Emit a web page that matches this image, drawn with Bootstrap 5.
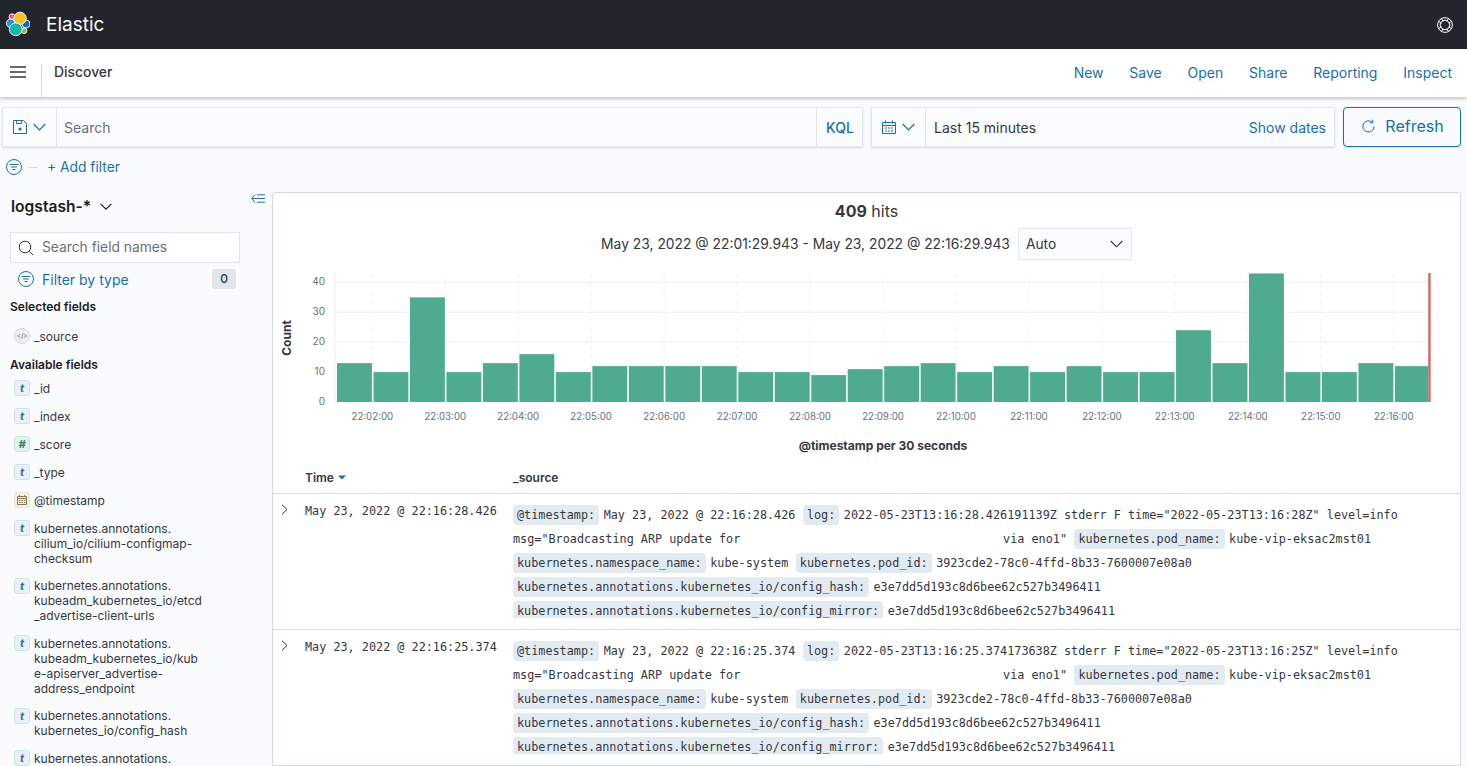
<!DOCTYPE html>
<html lang="en">
<head>
<meta charset="utf-8">
<title>Discover - Elastic</title>
<link href="https://cdn.jsdelivr.net/npm/bootstrap@5.3.0/dist/css/bootstrap.min.css" rel="stylesheet">
<style>
html,body{height:766px;overflow:hidden}
body{background:#fafbfd;font-family:Inter,"Liberation Sans",sans-serif;color:#343741;font-size:14px}
a{text-decoration:none}
.topbar{height:49px;background:#22252b;color:#fff}
.brand-txt{font-size:19px;font-weight:400;margin-left:16px;line-height:49px}
.help{margin-right:14px}
.subbar{height:48px;background:#fff;box-shadow:0 2px 3px rgba(60,70,90,.28);position:relative;z-index:2;padding-bottom:2px}
.burger{width:41px;padding-left:10px}
.subbar-sep{width:1px;height:32px;background:#d3dae6;align-self:flex-end;margin-bottom:-2px}
.crumb{margin:1px 0 0 12px;font-weight:500;color:#343741;font-size:13.9px}
.act-link{color:#1a6fa9;font-size:14px;margin-left:25.8px}
.act-wrap{padding-right:15px}
.qrow{padding:10px 6px 0 2px;gap:8px}
.qbox{height:40px;background:#fbfcfd;border:1px solid #e3e7ef;box-shadow:0 1px 2px rgba(60,70,90,.18)}
.qsearch{width:861px}
.qdate{width:464px}
.qpre{width:54px;border-right:1px solid #e3e7ef;height:100%;gap:6px;padding-left:10px}
.qtext{color:#69707d;font-size:14px;padding-left:7px}
.qval{color:#343741;font-size:14px;padding-left:8px}
.kql{width:46px;border-left:1px solid #e3e7ef;height:100%;color:#1a6fa9;font-size:14px;font-weight:500;padding-left:1px}
.sdates{color:#1a6fa9;font-size:14px;padding-right:8px}
.refresh{width:118px;height:40px;border:1px solid #1a6fa9;border-radius:4px;background:#f8fafd;color:#1a6fa9;font-size:16px;gap:10px;box-shadow:0 1px 2px rgba(60,70,90,.15);padding:0 0 2px 2px}
.frow{height:24px;margin-top:8px;padding-left:6px}
.fdash{width:10px;height:1px;background:#d3dae6;margin:0 9px 0 6px}
.fadd{color:#1a6fa9;font-size:13.8px}
.mainrow{margin-top:13px}
.sidecol{width:272px;flex:none;height:574px;overflow:hidden}
.pat-row{height:29px;padding:0 7px 0 11px}
.pat{font-size:15.6px;font-weight:600;color:#1a1c21;margin-right:9px}
.collapse-ic{margin-left:auto}
.fsearch{width:230px;height:31px;margin:11px 0 0 10px;background:#fff;border:1px solid #dfe4ec;color:#69707d;gap:8px;padding-left:7px;font-size:13.8px}
.ftype{width:226px;height:22px;margin:5px 0 0 10px;padding-left:8px;gap:8px;color:#1a6fa9;font-size:14px}
.zero{margin-left:auto;width:24px;height:20px;background:#e0e5ee;border-radius:3px;color:#343741;font-size:12px;font-weight:500}
.fhead{font-size:12px;font-weight:600;line-height:18px;color:#1a1c21;padding-left:10px}
.fhead-a{margin-top:8px}
.fhead-b{margin-top:6px}
.fitem{padding:6px 0 6px 14px;font-size:12px;line-height:15px;color:#343741;gap:4px}
.fitem-sel{margin-top:6px}
.ftxt{padding-top:.5px}
.ftic{width:16px;height:16px;flex:none;border-radius:3px;font-size:11px;line-height:14px;text-align:center;font-weight:700;font-style:italic;border:1px solid}
.ftic-t{background:#e8f1f8;border-color:#cfe0ee;color:#3a6a96}
.ftic-n{background:#e3f4ee;border-color:#c4e6da;color:#2d7a62}
.ftic-s{background:#eee;border-color:#d5d7da;color:#69707d;border-radius:50%;font-size:7px;font-style:normal;font-weight:400;letter-spacing:-.3px}
.ftic-d{background:#f5efe4;border-color:#ebe2d1;display:flex;align-items:center;justify-content:center}
.maincard{width:1189px;flex:none;background:#fff;border:1px solid #d3dae6;border-radius:3px 3px 0 0;height:580px;overflow:hidden}
.hits{text-align:center;font-size:16px;line-height:20px;margin-top:8px;color:#343741}
.hits b{font-weight:700}
.range{height:32px;margin-top:7px;gap:8px;font-size:13.85px;color:#343741}
.autosel{width:114px;height:32px;border:1px solid #e3e7ef;background:#fbfcfd;padding:0 8px 0 7px;font-size:13.8px}
.chart{display:block;margin-top:4px}
.chart text{font-family:Inter,"Liberation Sans",sans-serif}
.thead-row{height:32px;border-bottom:1px solid #d3dae6;font-size:12px;font-weight:600;color:#343741}
.col-caret{width:32px;flex:none}
.col-time{width:208px;flex:none}
.doc-row{height:136px;border-bottom:1px solid #d3dae6;padding-top:9px;font-family:"DejaVu Sans Mono","Liberation Mono",monospace;font-size:11.8px;color:#343741}
.doc-time{line-height:16px}
.caret-ic{margin:1px 0 0 8px;display:block}
.doc-src{height:115px;overflow:hidden;flex:1;min-width:0}
.src-line{line-height:24px;height:24px;white-space:pre;display:flex;align-items:center}
.key{background:#e2ebf2;border-radius:4px;padding:0 4px;height:20px;line-height:20px;margin-right:4.5px}
.val{margin-right:7.5px}
</style>
</head>
<body>
<div class="topbar d-flex align-items-center justify-content-between">
  <div class="d-flex align-items-center">
    <svg width="30" height="37" viewBox="0 6 30 37" aria-hidden="true">
      <g stroke="#fff" stroke-width=".9">
        <circle cx="12" cy="16.7" r="2.9" fill="#ef4f95"/>
        <circle cx="10.7" cy="23.3" r="4.3" fill="#2f8fd8"/>
        <circle cx="26" cy="24" r="4" fill="#0a6cc0"/>
        <circle cx="20" cy="18.3" r="6.2" fill="#fbbf24"/>
        <circle cx="24" cy="30.7" r="2.9" fill="#8cbf3f"/>
        <circle cx="15.7" cy="29.3" r="6.4" fill="#14b8a6"/>
      </g>
    </svg>
    <span class="brand-txt">Elastic</span>
  </div>
  <svg class="help" width="16" height="16" viewBox="0 0 16 16" fill="none" stroke="#fff" stroke-width="1" aria-hidden="true">
    <circle cx="8" cy="8" r="7.4"/><circle cx="8" cy="8" r="4.8"/>
    <path d="M1.6 4.6l3 1.6M4.6 1.6l1.6 3M11.4 1.6l-1.6 3M14.4 4.6l-3 1.6M1.6 11.4l3-1.6M4.6 14.4l1.6-3M11.4 14.4l-1.6-3M14.4 11.4l-3-1.6"/>
  </svg>
</div>

<div class="subbar d-flex align-items-center">
  <div class="burger d-flex align-items-center">
    <svg width="16" height="12" viewBox="0 0 16 12" aria-hidden="true"><path d="M0 1h16M0 6h16M0 11h16" stroke="#343741" stroke-width="1.4"/></svg>
  </div>
  <div class="subbar-sep"></div>
  <span class="crumb">Discover</span>
  <div class="act-wrap ms-auto d-flex">
    <a class="act-link" href="#">New</a>
    <a class="act-link" href="#">Save</a>
    <a class="act-link" href="#">Open</a>
    <a class="act-link" href="#">Share</a>
    <a class="act-link" href="#">Reporting</a>
    <a class="act-link" href="#">Inspect</a>
  </div>
</div>

<div class="qrow d-flex">
  <div class="qbox qsearch d-flex align-items-center">
    <div class="qpre d-flex align-items-center">
      <svg width="14" height="14" viewBox="0 0 14 14" fill="none" stroke="#1a6fa9" aria-hidden="true"><path d="M.5.5h10l3 3v10H.5zM3.5.5v3h5v-3"/><circle cx="7" cy="9" r="1.5" fill="#1a6fa9" stroke="none"/></svg>
      <svg width="13" height="8" viewBox="0 0 13 8" fill="none" stroke="#1a6fa9" stroke-width="1.2" aria-hidden="true"><path d="M.7 1l5.8 5.8L12.3 1"/></svg>
    </div>
    <span class="qtext flex-grow-1">Search</span>
    <div class="kql d-flex align-items-center justify-content-center">KQL</div>
  </div>
  <div class="qbox qdate d-flex align-items-center">
    <div class="qpre d-flex align-items-center">
      <svg width="14" height="14" viewBox="0 0 14 14" fill="none" stroke="#1a6fa9" aria-hidden="true"><path d="M.5 2.5h13v11H.5zM.5 5.5h13M3.5.5v3M10.5.5v3"/><path d="M3 8h2M6 8h2M9 8h2M3 11h2M6 11h2M9 11h2"/></svg>
      <svg width="13" height="8" viewBox="0 0 13 8" fill="none" stroke="#1a6fa9" stroke-width="1.2" aria-hidden="true"><path d="M.7 1l5.8 5.8L12.3 1"/></svg>
    </div>
    <span class="qval flex-grow-1">Last 15 minutes</span>
    <span class="sdates">Show dates</span>
  </div>
  <div class="refresh d-flex align-items-center justify-content-center">
    <svg width="13" height="14" viewBox="0 0 13 14" fill="none" stroke="#1a6fa9" stroke-width="1" aria-hidden="true"><path d="M10.6 3.6A5.6 5.6 0 1 0 12.1 7.5"/><path d="M10.8 .8v3h-3"/></svg>
    <span>Refresh</span>
  </div>
</div>

<div class="frow d-flex align-items-center">
  <svg width="16" height="16" viewBox="0 0 16 16" fill="none" stroke="#1a6fa9" aria-hidden="true"><circle cx="8" cy="8" r="7.5"/><path d="M3.5 5.5h9M5 8h6M6.5 10.5h3"/></svg>
  <span class="fdash"></span>
  <a class="fadd" href="#">+ Add filter</a>
</div>

<div class="mainrow d-flex">
  <aside class="sidecol">
    <div class="pat-row d-flex align-items-center">
      <span class="pat">logstash-*</span>
      <svg width="12" height="7" viewBox="0 0 12 7" fill="none" stroke="#1a1c21" stroke-width="1.1" aria-hidden="true"><path d="M.6.8L6 6.2 11.4.8"/></svg>
      <svg class="collapse-ic mb-3" width="14" height="9" viewBox="0 0 14 9" fill="none" stroke="#1a6fa9" aria-hidden="true"><path d="M4 .7L.8 4.5 4 8.3M1 4.5h13M6 .8h8M6 8.2h8"/></svg>
    </div>
    <div class="fsearch d-flex align-items-center">
      <svg width="16" height="16" viewBox="0 0 16 16" fill="none" stroke="#343741" aria-hidden="true"><circle cx="7" cy="7" r="5.8"/><path d="M11.2 11.2L15 15"/></svg>
      <span>Search field names</span>
    </div>
    <div class="ftype d-flex align-items-center">
      <svg width="16" height="16" viewBox="0 0 16 16" fill="none" stroke="#1a6fa9" aria-hidden="true"><circle cx="8" cy="8" r="7.5"/><path d="M3.5 5.5h9M5 8h6M6.5 10.5h3"/></svg>
      <span>Filter by type</span>
      <span class="zero d-flex align-items-center justify-content-center">0</span>
    </div>
    <div class="fhead fhead-a">Selected fields</div>
    <div class="fitem fitem-sel d-flex"><span class="ftic ftic-s">&lt;/&gt;</span><span class="ftxt">_source</span></div>
    <div class="fhead fhead-b">Available fields</div>
    <div class="fitem d-flex"><span class="ftic ftic-t">t</span><span class="ftxt">_id</span></div>
    <div class="fitem d-flex"><span class="ftic ftic-t">t</span><span class="ftxt">_index</span></div>
    <div class="fitem d-flex"><span class="ftic ftic-n">#</span><span class="ftxt">_score</span></div>
    <div class="fitem d-flex"><span class="ftic ftic-t">t</span><span class="ftxt">_type</span></div>
    <div class="fitem d-flex"><span class="ftic ftic-d"><svg width="10" height="10" viewBox="0 0 10 10" fill="none" stroke="#7a6a4a" stroke-width=".9" aria-hidden="true"><path d="M.5 1.5h9v8h-9zM.5 3.5h9M2.5 0v2M7.5 0v2M2 5.5h1.5M4.5 5.5H6M7 5.5h1.5M2 7.5h1.5M4.5 7.5H6M7 7.5h1.5"/></svg></span><span class="ftxt">@timestamp</span></div>
    <div class="fitem d-flex"><span class="ftic ftic-t">t</span><span class="ftxt">kubernetes.annotations.<br>cilium_io/cilium-configmap-<br>checksum</span></div>
    <div class="fitem d-flex"><span class="ftic ftic-t">t</span><span class="ftxt">kubernetes.annotations.<br>kubeadm_kubernetes_io/etcd<br>_advertise-client-urls</span></div>
    <div class="fitem d-flex"><span class="ftic ftic-t">t</span><span class="ftxt">kubernetes.annotations.<br>kubeadm_kubernetes_io/kub<br>e-apiserver_advertise-<br>address_endpoint</span></div>
    <div class="fitem d-flex"><span class="ftic ftic-t">t</span><span class="ftxt">kubernetes.annotations.<br>kubernetes_io/config_hash</span></div>
    <div class="fitem d-flex"><span class="ftic ftic-t">t</span><span class="ftxt">kubernetes.annotations.</span></div>
  </aside>

  <main class="maincard">
    <div class="hits"><b>409</b> hits</div>
    <div class="range d-flex align-items-center justify-content-center">
      <span>May 23, 2022 @ 22:01:29.943 - May 23, 2022 @ 22:16:29.943</span>
      <div class="autosel d-flex align-items-center justify-content-between">
        <span>Auto</span>
        <svg width="13" height="8" viewBox="0 0 13 8" fill="none" stroke="#343741" stroke-width="1.1" aria-hidden="true"><path d="M.7 1l5.8 5.8L12.3 1"/></svg>
      </div>
    </div>
    <svg class="chart" id="chart" width="1187" height="198" viewBox="273 264 1187 198" role="img" aria-label="Histogram"></svg>
    <div class="thead-row d-flex align-items-center">
      <div class="col-caret"></div>
      <div class="col-time d-flex align-items-center">Time
        <svg class="ms-1" width="8" height="5" viewBox="0 0 8 5" aria-hidden="true"><path d="M0 .5h8L4 4.5z" fill="#1a6fa9"/></svg>
      </div>
      <div>_source</div>
    </div>
    <div id="docs"></div>
  </main>
</div>

<script src="https://cdn.jsdelivr.net/npm/bootstrap@5.3.0/dist/js/bootstrap.bundle.min.js"></script>
<script>
(function(){
  var vals=[13,10,35,10,13,16,10,12,12,12,12,10,10,9,11,12,13,10,12,10,12,10,10,24,13,43,10,10,13,12];
  var base=402,unit=2.99,x0=337,step=36.48,out='';
  [10,20,30,40].forEach(function(v){var y=base-v*unit;out+='<line x1="335" x2="1430" y1="'+y+'" y2="'+y+'" stroke="#f3f4f7" stroke-width="1.5"/>';});
  for(var i=0;i<15;i++){var x=372.3+i*72.96;out+='<line x1="'+x+'" x2="'+x+'" y1="273" y2="402" stroke="#f0f2f5" stroke-width="1" stroke-dasharray="5 4"/>';}
  out+='<line x1="335" x2="335" y1="273" y2="402" stroke="#f3f4f7" stroke-width="1.5"/>';
  vals.forEach(function(v,i){
    var h=Math.min(v*unit,129),x=x0+i*step,w=i===29?33.2:34.9;
    out+='<rect x="'+x+'" y="'+(base-h)+'" width="'+w+'" height="'+h+'" fill="#4fab8f"/>';
  });
  out+='<rect x="1428" y="273" width="3" height="129" fill="#bd271e" opacity=".45"/><rect x="1428.7" y="273" width="1.2" height="129" fill="#bd271e" opacity=".5"/>';
  [0,10,20,30,40].forEach(function(v){out+='<text x="325" y="'+(base-v*unit+3)+'" font-size="10" text-anchor="end" fill="#69707d">'+v+'</text>';});
  for(var j=0;j<15;j++){var m=2+j;out+='<text x="'+(372.3+j*72.96)+'" y="420" font-size="9.7" text-anchor="middle" fill="#69707d">22:'+(m<10?'0':'')+m+':00</text>';}
  out+='<text x="883" y="450" font-size="12" font-weight="700" text-anchor="middle" fill="#343741">@timestamp per 30 seconds</text>';
  out+='<text transform="translate(291 338) rotate(-90)" font-size="12" font-weight="700" text-anchor="middle" fill="#343741">Count</text>';
  document.getElementById('chart').innerHTML=out;

  var gap=new Array(38).join(' ');
  function row(ts,log,sec){
    return '<div class="doc-row d-flex">'+
    '<div class="col-caret"><svg class="caret-ic" width="7" height="11" viewBox="0 0 7 11" fill="none" stroke="#343741" aria-hidden="true"><path d="M1 .8l5 4.7-5 4.7"/></svg></div>'+
    '<div class="col-time doc-time">'+ts+'</div>'+
    '<div class="doc-src">'+
    '<div class="src-line"><span class="key">@timestamp:</span><span class="val">'+ts+'</span><span class="key">log:</span><span class="val">'+log+'Z stderr F time="2022-05-23T13:16:'+sec+'Z" level=info</span></div>'+
    '<div class="src-line"><span class="val">msg="Broadcasting ARP update for'+gap+'via eno1"</span><span class="key">kubernetes.pod_name:</span><span class="val">kube-vip-eksac2mst01</span></div>'+
    '<div class="src-line"><span class="key">kubernetes.namespace_name:</span><span class="val">kube-system</span><span class="key">kubernetes.pod_id:</span><span class="val">3923cde2-78c0-4ffd-8b33-7600007e08a0</span></div>'+
    '<div class="src-line"><span class="key">kubernetes.annotations.kubernetes_io/config_hash:</span><span class="val">e3e7dd5d193c8d6bee62c527b3496411</span></div>'+
    '<div class="src-line"><span class="key">kubernetes.annotations.kubernetes_io/config_mirror:</span><span class="val">e3e7dd5d193c8d6bee62c527b3496411</span></div>'+
    '</div></div>';
  }
  document.getElementById('docs').innerHTML=
    row('May 23, 2022 @ 22:16:28.426','2022-05-23T13:16:28.426191139','28')+
    row('May 23, 2022 @ 22:16:25.374','2022-05-23T13:16:25.374173638','25');
})();
</script>
</body>
</html>
